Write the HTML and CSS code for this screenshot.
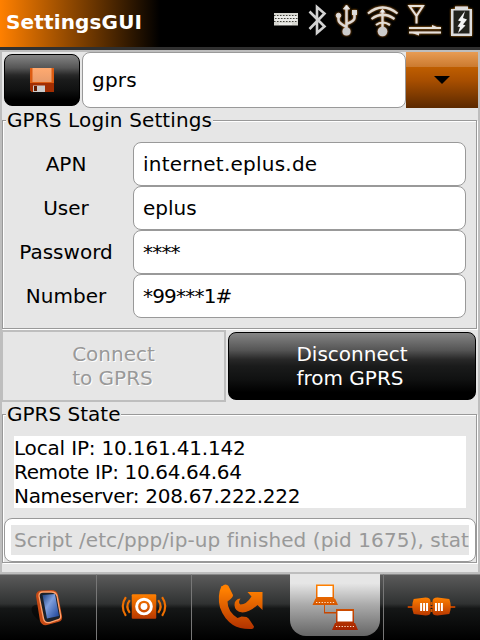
FILE: index.html
```html
<!DOCTYPE html>
<html lang="en">
<head>
<meta charset="utf-8">
<title>SettingsGUI</title>
<link rel="stylesheet" href="styles.css">
</head>
<body>
<header class="titlebar">
  <h1>SettingsGUI</h1>
  <svg class="status" width="210" height="47" viewBox="270 0 210 47">
    <defs><filter id="glow" x="-30%" y="-30%" width="160%" height="160%"><feDropShadow dx="0" dy="0" stdDeviation="1" flood-color="#e08818" flood-opacity="1"/></filter></defs>
    <rect x="274" y="13" width="24" height="12.500" fill="#d8d8d2"/>
    <path d="M274 15.500h24M275 18.500h23M274 21.500h24" stroke="#44443e" stroke-width="1" stroke-dasharray="1.500 1.500"/>
    <path d="M275 17h22M275 20h22M279 24h13" stroke="#fff" stroke-width="1"/>
    <path d="M309.500 11.500L324.500 26.500 317 33V7l7.500 6.500L309.500 29" fill="none" stroke="#d2d2d2" stroke-width="2.600"/>
    <g filter="url(#glow)" fill="none" stroke="#ddd9d4" stroke-width="2.400">
      <path d="M346.500 31V8M338.500 16v4q0 3 8 7M354.500 12v6q0 3-8 6"/>
      <path d="M343.500 9l3-4 3 4z" fill="#eee" stroke-width="1"/>
      <circle cx="346.500" cy="31.500" r="4" fill="#ccc" stroke="none"/>
      <circle cx="338.500" cy="15.500" r="2.200" fill="#ddd" stroke-width="1"/>
      <rect x="352.500" y="10.500" width="4" height="4" fill="#ddd" stroke-width="1"/>
    </g>
    <g filter="url(#glow)" fill="none" stroke="#e2ddd4" stroke-width="2.200">
      <path d="M368 13.500Q382.500 1.500 397.500 13.500M371.500 19Q382.500 10.500 394.500 19M376 25Q382.500 20 390 25M382.500 10v20"/>
      <path d="M379.500 12.500l3-3.500 3 3.500z" fill="#eee" stroke="none"/>
      <circle cx="382.500" cy="31.500" r="4.800" fill="#ccc" stroke="none"/>
    </g>
    <g filter="url(#glow)" fill="none" stroke="#e6e1da" stroke-width="2">
      <path d="M409.500 6h13.500l-6.500 10zM416.500 15v8.500"/>
      <path d="M409 28h32M409 32.500h32" stroke-width="2"/><path d="M432 25l7 3h-7zM419 35.500l-8-3h8z" fill="#e6e1da" stroke="none"/>
    </g>
    <g filter="url(#glow)">
      <path d="M451 9h4V6.500h13V9h4v27h-21z" fill="#ddd"/>
      <path d="M453.500 10.500h16v23h-16z" fill="#24211f"/>
      <path d="M465 11l-7 9.500 3 1-3.500 5 2.500.5-2 6 7.500-7.500-2.500-1 4-5-4-1.500z" fill="#f3f3f3"/>
    </g>
  </svg>
</header>
<main>
  <div class="profile">
    <button class="dark save" aria-label="Save"><svg width="24" height="24" viewBox="0 0 24 24">
      <defs><linearGradient id="or" x1="0" y1="0" x2="0" y2="1"><stop stop-color="#ff8000"/><stop offset="1" stop-color="#b83800"/></linearGradient><linearGradient id="lb" x1="0" y1="0" x2="0" y2="1"><stop stop-color="#ffaa70"/><stop offset="1" stop-color="#e89c6c"/></linearGradient></defs>
      <path d="M0 0h24v24H2l-2-2z" fill="#dc5c12"/><path d="M0 15h24v9H2l-2-2z" fill="#a22e02"/><path d="M2.500 0h19v14h-19z" fill="url(#lb)"/><path d="M3 17.500h12V24H3z" fill="#ccc"/><path d="M4 18h3v5H4z" fill="#651c00"/></svg></button>
    <div class="field name">gprs</div>
    <button class="drop" aria-label="Choose profile"><svg width="16" height="8"><path d="M0 0h16L8 8z"/></svg></button>
  </div>
  <fieldset class="login">
    <legend>GPRS Login Settings</legend>
    <div class="row"><label>APN</label><div class="field apn">internet.eplus.de</div></div>
    <div class="row"><label>User</label><div class="field">eplus</div></div>
    <div class="row"><label>Password</label><div class="field number">****</div></div>
    <div class="row"><label>Number</label><div class="field number">*99***1#</div></div>
  </fieldset>
  <div class="actions">
    <button class="disabled" disabled><span>Connect<br>to GPRS</span></button>
    <button class="dark disconnect"><span>Disconnect<br>from GPRS</span></button>
  </div>
  <fieldset class="state">
    <legend>GPRS State</legend>
    <div class="ips"><div class="local">Local IP: 10.161.41.142</div><div class="remote">Remote IP: 10.64.64.64</div><div class="dns">Nameserver: 208.67.222.222</div></div>
    <div class="script"><div>Script /etc/ppp/ip-up finished (pid 1675), stat</div></div>
  </fieldset>
</main>
<nav>
  <a><svg viewBox="0 574 96 66">
    <defs><linearGradient id="scr" x1="0" y1="0" x2="1" y2="1"><stop stop-color="#1c3f7c"/><stop offset=".4" stop-color="#7f9fdd"/><stop offset="1" stop-color="#183f94"/></linearGradient></defs>
    <ellipse cx="42" cy="614" rx="12" ry="7" fill="#000" opacity=".5" transform="rotate(38 42 614)"/>
    <path d="M36 596Q36 591 41 590.500L51 590Q57 590 58 595L62 616Q63 621 58 622L47 625Q42 626 40 621z" fill="#c64a15"/>
    <path d="M39 596Q39 592 43 592h8q5 0 6 4l3.500 19q1 4-3 5l-8 2.500q-5 1-6-4z" fill="#1b2129" stroke="#ffa36e" stroke-width="1.300"/>
    <path d="M42.500 595l12.500-1 4 22-12 2.500z" fill="url(#scr)"/></svg></a>
  <a><svg viewBox="96 574 96 66"><rect x="131.500" y="594" width="25" height="25" rx="1" fill="url(#or)"/><circle cx="144" cy="606.500" r="7.500" fill="none" stroke="#fff" stroke-width="3"/><circle cx="144" cy="606.500" r="3.500" fill="#fff"/>
    <path d="M129.500 600q-5 6.500 0 13M125.500 597q-6.500 9.500 0 19M158.500 600q5 6.500 0 13M162.500 597q6.500 9.500 0 19" fill="none" stroke="#f07000" stroke-width="2.200"/></svg></a>
  <a><svg viewBox="191 574 96 66"><defs><linearGradient id="ph" gradientUnits="userSpaceOnUse" x1="0" y1="590" x2="0" y2="630"><stop stop-color="#ff8000"/><stop offset="1" stop-color="#b03000"/></linearGradient></defs><g fill="url(#ph)"><path d="M221 586q1-1.500 3-1.500t3 1.500l4.500 9q.5 2-5.500 6.500 0 10 10 16.500 2.500-1 4-1.500l5 .5q2.500 1 3.500 3.500l4 6q0 2-2 2.500-12 .5-19-4-9-6-13-17.500-3-12 1.500-21.500z"/><path d="M246 592h15v18l-5-5q-8 7.500-15 7.500-8-1-8-7.500 0-6 6-6.500-3 4 0 6 6 0 11-8z"/></g></svg></a>
  <a class="active"><div><svg viewBox="290 574 90 62"><defs><linearGradient id="pc" gradientUnits="userSpaceOnUse" x1="0" y1="585" x2="0" y2="630"><stop stop-color="#ff8000"/><stop offset="1" stop-color="#a32200"/></linearGradient></defs>
    <g fill="url(#pc)"><path d="M316 584.500h18v14h1l3 6.500h-25.500l3-6.500h.5zM336 609h18v14h1l3 7h-26l3-7h1zM324 605h1v7h11v1.500h-12z"/></g>
    <path d="M317.500 586h15v11h-15zM337.500 611h15v10.500h-15z" fill="#fff"/><path d="M316 602.500h19M336 626.500h18" stroke="#ffe4cc" stroke-width="1.200" stroke-dasharray="1.300 1.500"/></svg></div></a>
  <a><svg viewBox="383 574 97 66"><path d="M407 606h48v2h-48z" fill="#b84200"/><path d="M413 599l12-1.500q5 0 5 4v11q0 3-5 3l-12-1.500q-3-7 0-15zM449 599l-12-1.500q-5 0-5 4v11q0 3 5 3l12-1.500q3-7 0-15z" fill="url(#or)"/><path d="M430 602h2v3h-2zM430 609h2v3h-2z" fill="#d55800"/><path d="M420.500 603v8M423.500 603v8M426.500 603v8M435.500 603v8M438.500 603v8M441.500 603v8" stroke="#fff" stroke-width="2"/></svg></a>
</nav>
</body>
</html>
```
FILE: styles.css
```css
* { box-sizing: border-box; }
body { margin: 0; width: 480px; height: 640px; overflow: hidden; background: #e6e6e6; font: 20px/24px "DejaVu Sans", sans-serif; color: #000; }
button { font: inherit; padding: 0; margin: 0; border: 0; }
.titlebar { height: 50px; border-bottom: 3px solid #303030; display: flex; justify-content: space-between; background: linear-gradient(90deg, #ff8000 0, #000 160px); }
h1 { margin: 0; padding: 10px 0 0 6px; color: #fff; font-size: 20px; line-height: 24px; letter-spacing: .15px; }
.status { display: block; }
main { height: 524px; border: 2px solid #bebebe; }
.profile { display: flex; height: 56px; }
.dark { color: #fff; border: 1px solid #000; border-radius: 8px; background: linear-gradient(#858585, #555 26%, #282828 40%, #1a1b1b 50%, #101111 70%, #000 90%); display: flex; align-items: center; justify-content: center; }
.save { width: 76px; height: 52px; margin: 2px 2px 0; }
.field { background: #fff; border: 1px solid #999; border-radius: 8px; padding-left: 9px; }
.name { width: 324px; height: 56px; line-height: 54px; letter-spacing: .2px; }
.drop { width: 72px; background: linear-gradient(#e89c54, #cc7b30 26%, #bf5e00 27%, #a94f00 50%, #5b2900); display: flex; align-items: center; justify-content: center; }
fieldset { margin: 0; padding: 0; min-width: 0; border: 1px solid #999; box-shadow: inset 1px 1px #fff, 1px 1px #fff; width: 475px; }
legend { margin-left: 3px; padding: 0 1px; height: 24px; background: #e6e6e6; letter-spacing: .12px; }
.login { height: 221px; }
.row { display: flex; height: 44px; align-items: center; }
.row:nth-of-type(1) { margin-top: 10px; }
.row label { width: 126px; text-align: center; margin-right: 4px; }
.row .field { width: 333px; height: 44px; line-height: 42px; }
.row .apn { letter-spacing: .23px; }
.row .number { letter-spacing: -.8px; }
.actions { display: flex; height: 73px; padding-top: 1px; }
.disabled { width: 224px; height: 72px; border: 2px solid #bebebe; border-left-width: 1px; background: #e6e6e6; color: #999; text-shadow: 1px 1px #fff; display: flex; align-items: center; justify-content: center; }
.disabled span, .disconnect span { display: inline-block; text-align: left; }
.disconnect { width: 248px; height: 68px; margin: 2px 0 0 2px; }
.state { height: 161px; }
.state legend { letter-spacing: 0; }
.ips { width: 452px; height: 72px; margin: 10px 0 10px 11px; background: #fff; }
.local { letter-spacing: -.17px; }
.remote { letter-spacing: -.36px; }
.dns { letter-spacing: -.31px; }
.script { width: 472px; height: 44px; margin-left: 1px; padding: 6px; background: #fff; border: 1px solid #999; border-radius: 8px; }
.script div { height: 30px; line-height: 30px; padding-left: 3px; background: #e6e6e6; color: #999; overflow: hidden; white-space: nowrap; letter-spacing: .08px; }
nav { display: grid; grid-template-columns: 97px 95px 97px 95px 96px; height: 66px; background: linear-gradient(#5c5c5c, #303232 45%, #151717 52%, #000); }
nav a { border-right: 1px solid #777; border-top: 1px solid #888; height: 66px; }
nav a:nth-child(3), nav a:last-child { border-right: 0; }
nav svg { display: block; width: 100%; height: 66px; margin-top: -1px; }
.active { padding-left: 1px; }
.active div { width: 90px; height: 62px; margin-top: -1px; border-radius: 0 0 16px 16px; background: linear-gradient(#e6e6e6 15%, #aaa 50%, #666); }
.active div svg { width: 90px; height: 62px; margin: 0; }
```
